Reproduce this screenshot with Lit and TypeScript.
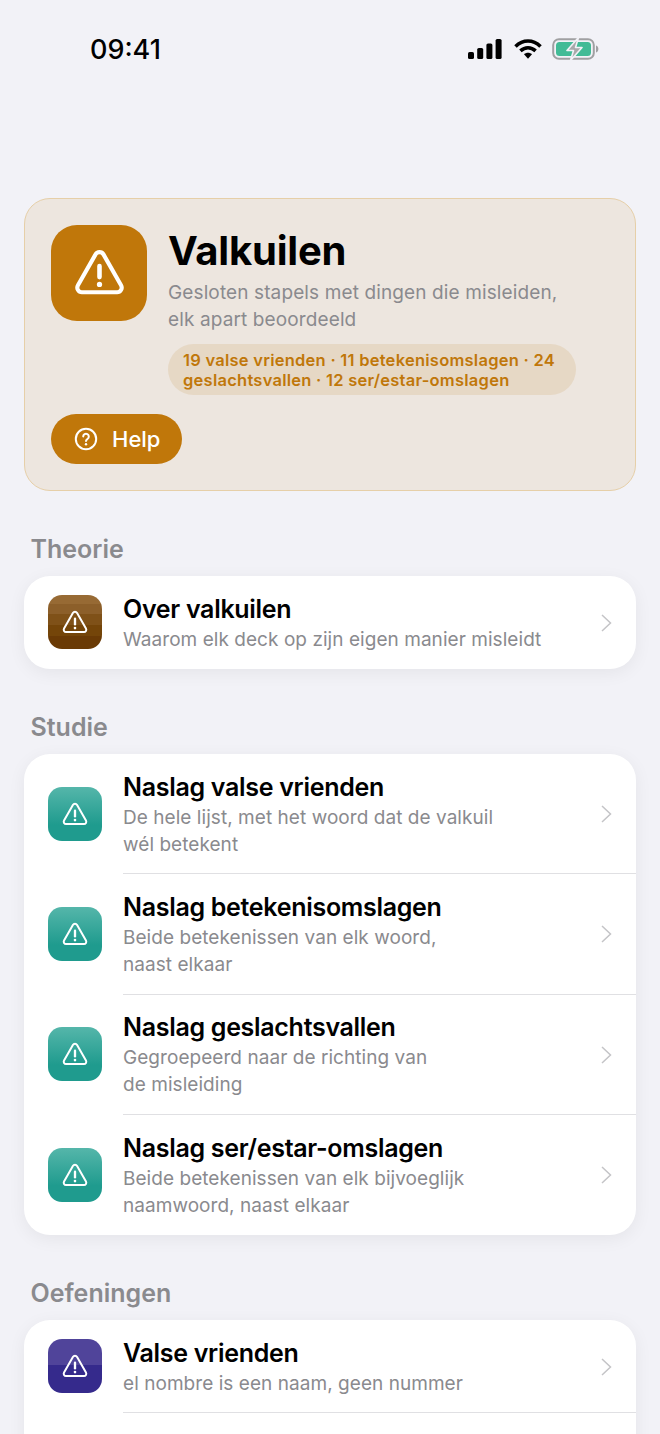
import { LitElement, html, css, svg } from "lit";
import { customElement } from "lit/decorators.js";

const warn = (sw: number) => svg`<path d="M10.2 4.2 2.6 17.6A2 2 0 0 0 4.4 20.6H19.6A2 2 0 0 0 21.4 17.6L13.8 4.2A2.05 2.05 0 0 0 10.2 4.2Z" fill="none" stroke="#fff" stroke-width="${sw}" stroke-linejoin="round"/><path d="M12 9.2V14" fill="none" stroke="#fff" stroke-width="2" stroke-linecap="round"/><circle cx="12" cy="17.2" r="1.15" fill="#fff"/>`;

type Row = { t: string; s: string[] };
const study: Row[] = [
  { t: "Naslag valse vrienden", s: ["De hele lijst, met het woord dat de valkuil", "wél betekent"] },
  { t: "Naslag betekenisomslagen", s: ["Beide betekenissen van elk woord,", "naast elkaar"] },
  { t: "Naslag geslachtsvallen", s: ["Gegroepeerd naar de richting van", "de misleiding"] },
  { t: "Naslag ser/estar-omslagen", s: ["Beide betekenissen van elk bijvoeglijk", "naamwoord, naast elkaar"] },
];

@customElement("app-root")
export class AppRoot extends LitElement {
  static styles = css`
    :host { display: block; width: 660px; height: 1434px; overflow: hidden; background: #f2f2f7; font-family: Inter, "Liberation Sans", sans-serif; color: #000; }
    .status { height: 98px; box-sizing: border-box; padding: 0 61px 0 90px; display: flex; align-items: center; justify-content: space-between; }
    .time { font-size: 27px; font-weight: 500; line-height: 32px; padding-top: 1px; }
    .sicons { display: flex; align-items: center; gap: 10px; }
    .sicons svg { display: block; }
    .content { padding: 100px 24px 0; display: flex; flex-direction: column; }
    .hero { box-sizing: border-box; height: 293px; background: #ede6df; border: 1.5px solid #e6cfa8; border-radius: 26px; padding: 25.5px 26px; display: flex; flex-direction: column; }
    .hero-top { display: flex; gap: 21px; align-items: flex-start; }
    .hero-icon { width: 96px; height: 96px; border-radius: 26px; background: #c0770a; display: flex; align-items: center; justify-content: center; flex: none; }
    .hero-icon svg { width: 55px; height: 55px; }
    .hero-title { font-size: 40px; line-height: 48px; font-weight: 700; letter-spacing: -0.2px; margin-top: 2px; }
    .hero-sub { font-size: 19px; line-height: 27px; color: #8a8a8e; margin-top: 4px; letter-spacing: 0.12px; }
    .pill { margin-top: 11px; width: 408px; box-sizing: border-box; padding: 6.5px 15px 4.5px; border-radius: 26px; background: #e6d8c5; color: #c0770a; font-size: 16.5px; line-height: 20px; font-weight: 600; letter-spacing: 0.25px; }
    .help { margin-top: 19px; width: 131px; height: 50px; border-radius: 25px; background: #c0770a; color: #fff; display: flex; align-items: center; gap: 14px; padding-left: 23px; box-sizing: border-box; font-size: 22px; font-weight: 500; }
    .section { font-size: 25px; font-weight: 600; color: #8a8a8e; line-height: 30px; padding-left: 6.5px; }
    .section.first { margin-top: 43px; margin-bottom: 12px; }
    .section.next { margin-top: 43px; margin-bottom: 12px; }
    .card { background: #fff; border-radius: 26px; box-shadow: 0 4px 18px rgba(0,0,0,.06); }
    .row { display: flex; align-items: center; padding-left: 24px; position: relative; box-sizing: border-box; }
    .row.tall { height: 120.33px; }
    .row.short { height: 93px; }
    .row:not(:last-child)::after { content: ""; position: absolute; left: 99px; right: 0; bottom: 0; height: 1px; background: #e0e0e3; }
    .ic { width: 54px; height: 54px; border-radius: 14px; flex: none; display: flex; align-items: center; justify-content: center; margin-top: -1px; }
    .ic svg { width: 28px; height: 28px; }
    .brown { background: linear-gradient(#976a34 0 16%, #8c5f2a 16% 36%, #7f5118 36% 56%, #744509 56% 76%, #6a3a05 76%); }
    .teal { background: linear-gradient(#55b6aa, #1f9b8e 70%); }
    .purple { background: linear-gradient(#50449a 0 48%, #352a8c 48%); }
    .text { margin-left: 21px; flex: 1; min-width: 0; padding-top: 1px; }
    .t { font-size: 25px; line-height: 30px; font-weight: 600; letter-spacing: -0.3px; margin-bottom: 2px; }
    .s { font-size: 19px; line-height: 27px; color: #8a8a8e; letter-spacing: 0.05px; }
    .chev { width: 13px; height: 20px; margin-right: 23px; flex: none; }
    .spacer { height: 80px; }
  `;

  private row(r: Row, cls: string, size: string) {
    return html`<div class="row ${size}">
      <div class="ic ${cls}"><svg viewBox="0 0 24 24">${warn(1.7)}</svg></div>
      <div class="text"><div class="t">${r.t}</div>${r.s.map((l) => html`<div class="s">${l}</div>`)}</div>
      <svg class="chev" viewBox="0 0 13 20"><path d="M2 2l8.5 8-8.5 8" fill="none" stroke="#c4c4c7" stroke-width="1.5"/></svg>
    </div>`;
  }

  render() {
    return html`
      <div class="status">
        <div class="time">09:41</div>
        <div class="sicons">
          <svg width="36" height="22" viewBox="0 0 36 22"><rect x="0" y="14" width="6" height="7" rx="1.6"/><rect x="9.2" y="10" width="6" height="11" rx="1.6"/><rect x="18.4" y="5.5" width="6" height="15.5" rx="1.6"/><rect x="27.6" y="1" width="6" height="20" rx="1.6"/></svg>
          <svg width="28" height="22" viewBox="0 0 28 22"><path d="M1.5 8.5C9 1.2 19 1.2 26.5 8.5M6.4 12.9C11 8.8 17 8.8 21.6 12.9" fill="none" stroke="#000" stroke-width="3.6"/><path d="M10 16.2C12.4 14.2 15.6 14.2 18 16.2L14 20.8Z"/></svg>
          <svg width="47" height="24" viewBox="0 0 47 24"><rect x="1.2" y="2.2" width="40.6" height="19.6" rx="5.8" fill="none" stroke="#a0a0a2" stroke-width="2"/><rect x="4" y="5" width="35" height="14" rx="3.5" fill="#42bb96"/><path d="M44 8.5c1.8.6 2.4 2 2.4 3.5s-.6 2.9-2.4 3.5Z" fill="#a0a0a2"/><path d="M26.5 .5 15 13.5h6.5L18.5 23.5 30 10.5h-6.5Z" fill="#a8a8aa" stroke="#f2f2f7" stroke-width="1.6" stroke-linejoin="round"/></svg>
        </div>
      </div>
      <div class="content">
        <div class="hero">
          <div class="hero-top">
            <div class="hero-icon"><svg viewBox="0 0 24 24">${warn(1.8)}</svg></div>
            <div>
              <div class="hero-title">Valkuilen</div>
              <div class="hero-sub">Gesloten stapels met dingen die misleiden,<br />elk apart beoordeeld</div>
              <div class="pill">19 valse vrienden · 11 betekenisomslagen · 24 geslachtsvallen · 12 ser/estar-omslagen</div>
            </div>
          </div>
          <div class="help">
            <svg width="24" height="24" viewBox="0 0 24 24"><circle cx="12" cy="12" r="10.2" fill="none" stroke="#fff" stroke-width="2"/><path d="M9.2 9.4a2.8 2.8 0 1 1 4.4 2.4c-1 .6-1.6 1.1-1.6 2.2" fill="none" stroke="#fff" stroke-width="2" stroke-linecap="round"/><circle cx="12" cy="17.3" r="1.2" fill="#fff"/></svg>
            <span>Help</span>
          </div>
        </div>
        <div class="section first">Theorie</div>
        <div class="card">${this.row({ t: "Over valkuilen", s: ["Waarom elk deck op zijn eigen manier misleidt"] }, "brown", "short")}</div>
        <div class="section next">Studie</div>
        <div class="card">${study.map((r) => this.row(r, "teal", "tall"))}</div>
        <div class="section next">Oefeningen</div>
        <div class="card">
          ${this.row({ t: "Valse vrienden", s: ["el nombre is een naam, geen nummer"] }, "purple", "short")}
          <div class="spacer"></div>
        </div>
      </div>
    `;
  }
}
